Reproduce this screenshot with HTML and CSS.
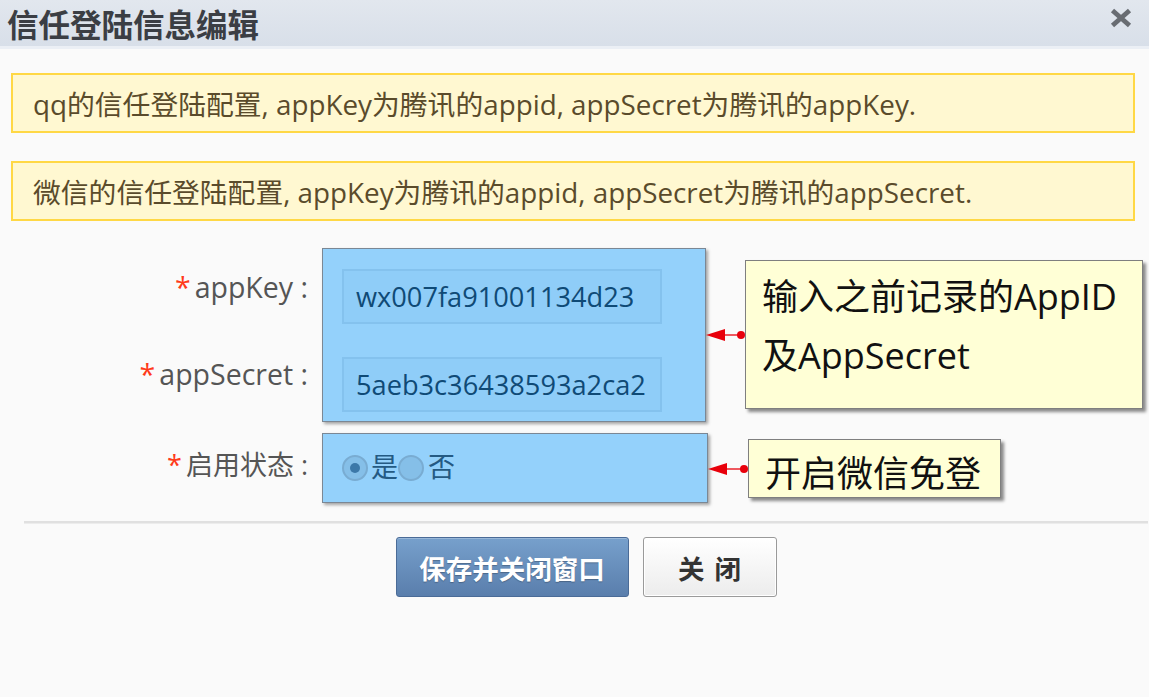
FILE: index.html
```html
<!DOCTYPE html>
<html lang="zh-CN">
<head>
<meta charset="utf-8">
<title>信任登陆信息编辑</title>
<link rel="stylesheet" href="styles.css">
</head>
<body>
<div class="dialog">
  <div class="header">
    <h1 class="title">信任登陆信息编辑</h1>
    <span class="close">
      <svg width="22" height="20" viewBox="0 0 22 20"><path d="M2.5 2.5 L19.5 17.5 M19.5 2.5 L2.5 17.5" stroke="#686c72" stroke-width="4.8" stroke-linecap="butt" fill="none"/></svg>
    </span>
  </div>
  <div class="body">
    <div class="tips">
      <div class="tip">qq的信任登陆配置, appKey为腾讯的appid, appSecret为腾讯的appKey.</div>
      <div class="tip">微信的信任登陆配置, appKey为腾讯的appid, appSecret为腾讯的appSecret.</div>
    </div>

    <div class="group g1">
      <div class="labels">
        <div class="label"><span class="req">*</span>appKey :</div>
        <div class="label l2"><span class="req">*</span>appSecret :</div>
      </div>
      <div class="hl hl1">
        <div class="input">wx007fa91001134d23</div>
        <div class="input in2">5aeb3c36438593a2ca2</div>
      </div>
      <div class="note n1">
        <svg class="arrow" width="39" height="14" viewBox="0 0 39 14"><path d="M0 7 L19 1 L19 13 Z" fill="#e8000b"/><line x1="18" y1="7" x2="36" y2="7" stroke="#e8000b" stroke-width="1.3"/><circle cx="35" cy="7" r="4" fill="#e8000b"/></svg>
        <div class="callout c1">输入之前记录的AppID<br>及AppSecret</div>
      </div>
    </div>

    <div class="group g2">
      <div class="labels">
        <div class="label cjk"><span class="req">*</span>启用状态 :</div>
      </div>
      <div class="hl hl2">
        <span class="radio checked"></span><span class="opt">是</span><span class="radio"></span><span class="opt o2">否</span>
      </div>
      <div class="note n2">
        <svg class="arrow" width="40" height="14" viewBox="0 0 40 14"><path d="M0 7 L19 1 L19 13 Z" fill="#e8000b"/><line x1="18" y1="7" x2="37" y2="7" stroke="#e8000b" stroke-width="1.3"/><circle cx="36" cy="7" r="4" fill="#e8000b"/></svg>
        <div class="callout c2">开启微信免登</div>
      </div>
    </div>

    <div class="divider"></div>

    <div class="footer">
      <button class="btn primary">保存并关闭窗口</button>
      <button class="btn plain">关 闭</button>
    </div>
  </div>
</div>
</body>
</html>
```

FILE: styles.css
```css
* { box-sizing: border-box; }

html, body {
  margin: 0;
  padding: 0;
  background: #ffffff;
}

body {
  font-family: "Open Sans", "Noto Sans CJK SC", sans-serif;
}

.dialog {
  width: 1149px;
  height: 697px;
  background: #fafafa;
  overflow: hidden;
}

.header {
  height: 49px;
  display: flex;
  justify-content: space-between;
  align-items: flex-start;
  padding: 0 17px 0 7px;
  background: linear-gradient(#e2e7ee, #d8dfe9);
  border-bottom: 3px solid #ebeff5;
}

.title {
  margin: 0;
  font-family: "Noto Sans CJK SC", sans-serif;
  font-weight: 700;
  font-size: 31.5px;
  line-height: 46px;
  color: #3b3e44;
  white-space: nowrap;
}

.close {
  display: block;
  margin-top: 8px;
  width: 22px;
  height: 20px;
}
.close svg { display: block; }

.body {
  padding-top: 24px;
}

.tips {
  display: flex;
  flex-direction: column;
  gap: 28px;
  margin: 0 14px 27px 11px;
}

.tip {
  height: 60px;
  display: flex;
  align-items: center;
  padding-left: 20px;
  background: #fff8d1;
  border: 2px solid #ffd845;
  font-size: 27.8px;
  color: #5a4b2b;
  white-space: nowrap;
}

.group {
  display: flex;
  align-items: flex-start;
}
.g2 { margin-top: 11px; }

.labels {
  width: 322px;
  padding-right: 14px;
  text-align: right;
  font-size: 28.5px;
  color: #555555;
}
.g1 .labels { padding-top: 19px; }
.g2 .labels { padding-top: 12px; }

.label {
  height: 40px;
  line-height: 40px;
  white-space: nowrap;
}
.label.cjk { font-size: 27px; }
.label.l2 { margin-top: 47px; }

.req {
  color: #ff3a1a;
  margin-right: 4px;
}

.hl {
  background: #94d1fb;
  border: 1px solid #7b8794;
  box-shadow: 2px 2px 3px rgba(0, 0, 0, 0.35);
}

.hl1 {
  width: 384px;
  height: 174px;
  padding: 20px 0 0 19px;
}

.input {
  width: 320px;
  height: 55px;
  display: flex;
  align-items: center;
  padding-left: 12px;
  background: #8fcdf8;
  border: 2px solid #84c2ee;
  font-size: 27.2px;
  color: #0f4a76;
  white-space: nowrap;
}
.input.in2 { margin-top: 33px; }

.hl2 {
  width: 386px;
  height: 70px;
  padding-left: 19px;
  display: flex;
  align-items: center;
  font-family: "Noto Sans CJK SC", sans-serif;
  font-size: 27px;
  color: #245a83;
}

.radio {
  width: 26px;
  height: 26px;
  border-radius: 50%;
  background: #85bfe8;
  border: 2px solid #79acd2;
  display: flex;
  align-items: center;
  justify-content: center;
}
.radio.checked::after {
  content: "";
  width: 10px;
  height: 10px;
  border-radius: 50%;
  background: #3c78a8;
}

.opt {
  margin-left: 3px;
  line-height: 30px;
  position: relative;
  top: -2px;
}
.opt.o2 { margin-left: 4px; }

.note {
  display: flex;
  align-items: center;
}
.note .arrow { display: block; flex: none; }
.n1 { margin-top: 12px; }
.n2 { margin-top: 6px; }

.callout {
  background: #ffffd6;
  border: 1px solid #7f7f7f;
  box-shadow: 3px 3px 3px rgba(0, 0, 0, 0.45);
  color: #111111;
  font-size: 36px;
  white-space: nowrap;
}

.c1 {
  width: 398px;
  height: 149px;
  padding: 6px 0 0 16px;
  line-height: 59px;
}

.c2 {
  width: 253px;
  height: 59px;
  padding: 9px 0 0 16px;
  line-height: 50px;
}

.divider {
  margin: 18px 1px 0 24px;
  height: 3px;
  background: #e0e0e0;
  border-bottom: 1px solid #ececec;
}

.footer {
  margin: 13px 1px 0 24px;
  display: flex;
  justify-content: center;
  gap: 14px;
}

.btn {
  height: 60px;
  font-family: "Noto Sans CJK SC", sans-serif;
  font-weight: 700;
  font-size: 26.5px;
  border-radius: 3px;
  padding: 0;
  cursor: pointer;
}

.btn.primary {
  width: 233px;
  color: #ffffff;
  background: linear-gradient(#77a0cc, #5a7eac);
  border: 1px solid #4a6b97;
  text-shadow: 0 1px 1px rgba(0, 0, 0, 0.25);
  box-shadow: inset 0 1px 0 rgba(255, 255, 255, 0.25);
}

.btn.plain {
  width: 134px;
  color: #333333;
  letter-spacing: 2px;
  text-indent: 2px;
  background: linear-gradient(#ffffff, #ececec);
  border: 1px solid #9a9a9a;
  box-shadow: inset 0 0 0 1px #ffffff;
}
```
